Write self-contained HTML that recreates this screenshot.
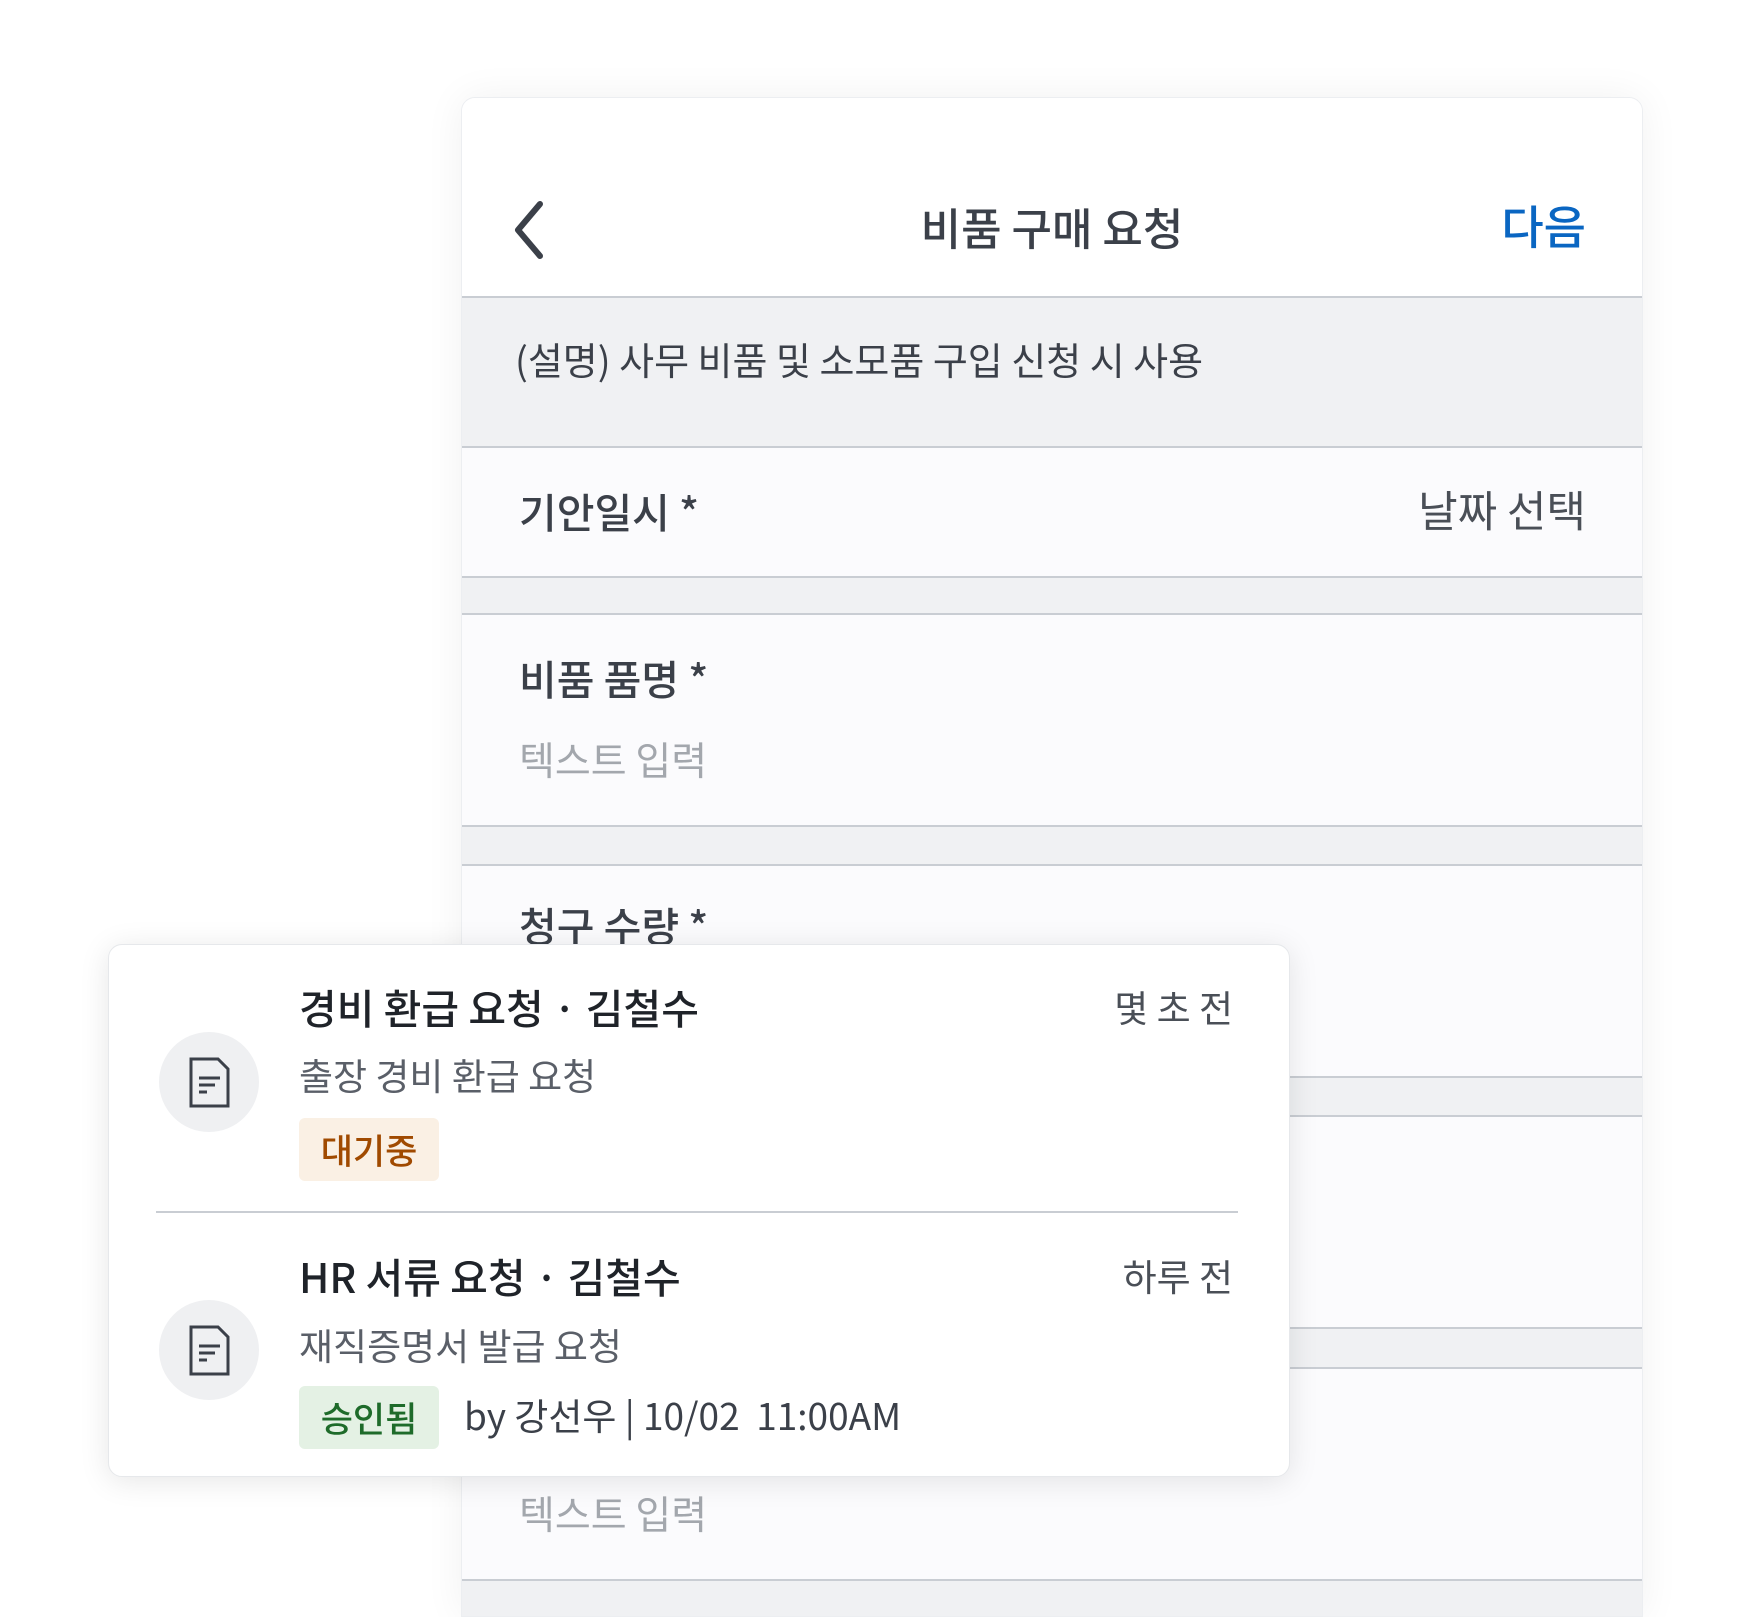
<!DOCTYPE html>
<html><head><meta charset="utf-8"><style>
*{margin:0;padding:0;box-sizing:border-box}
body{width:1751px;height:1601px;background:#fff;position:relative;overflow:hidden;font-family:"Noto Sans CJK KR","Liberation Sans",sans-serif;color:#3b4049}
.panel{position:absolute;left:461px;top:97px;width:1182px;height:1520px;background:#fbfbfd;border:1px solid #eceef1;border-radius:14px 14px 0 0;box-shadow:0 0 40px rgba(0,0,0,0.06);overflow:hidden}
.abs{position:absolute}
.hdr{left:0;top:0;width:100%;height:200px;background:#fff;border-bottom:2px solid #c9cdd3}
.band{left:0;width:100%;background:#f0f1f3;border-bottom:2px solid #c9cdd3}
.t{position:absolute;white-space:nowrap;line-height:1}
.lbl{font-size:41px;font-weight:500;color:#3b4049}
.ph{font-size:39px;color:#a3a7ad}
.card{position:absolute;left:108px;top:944px;width:1182px;height:533px;background:#fff;border:1px solid #e6e8eb;border-radius:14px;box-shadow:0 4px 30px rgba(0,0,0,0.10)}
.circ{position:absolute;left:50px;width:100px;height:100px;border-radius:50%;background:#eff0f2}
.ttl{font-size:41px;font-weight:500;color:#1f2329}
.sub{font-size:37px;color:#5a5f68}
.badge{position:absolute;left:190px;width:140px;height:63px;border-radius:6px;font-size:35px;font-weight:500;line-height:63px;text-align:center}
</style></head><body>
<div class="panel">
  <div class="abs hdr">
    <svg class="abs" style="left:48px;top:100px" width="40" height="64" viewBox="0 0 40 64"><path d="M30 6 L8 32 L30 58" fill="none" stroke="#3b4049" stroke-width="6" stroke-linecap="round" stroke-linejoin="round"/></svg>
    <div class="t" style="left:0;width:100%;text-align:center;top:106px;font-size:44px;font-weight:500">비품 구매 요청</div>
    <div class="t" style="right:56px;top:104px;font-size:46px;font-weight:500;color:#0a66c2">다음</div>
  </div>
  <div class="abs band" style="top:200px;height:150px;background:#f0f1f3">
    <div class="t" style="left:53px;top:42px;font-size:38px;color:#3b4049">(설명) 사무 비품 및 소모품 구입 신청 시 사용</div>
  </div>
  <div class="abs" style="top:350px;left:0;width:100%;height:130px;border-bottom:2px solid #c9cdd3">
    <div class="t lbl" style="left:57px;top:42px">기안일시 *</div>
    <div class="t" style="right:56px;top:40px;font-size:43px;color:#4a4f57">날짜 선택</div>
  </div>
  <div class="abs band" style="top:480px;height:37px"></div>
  <div class="abs" style="top:517px;left:0;width:100%;height:212px;border-bottom:2px solid #c9cdd3">
    <div class="t lbl" style="left:57px;top:42px">비품 품명 *</div>
    <div class="t ph" style="left:57px;top:125px">텍스트 입력</div>
  </div>
  <div class="abs band" style="top:729px;height:39px"></div>
  <div class="abs" style="top:768px;left:0;width:100%;height:212px;border-bottom:2px solid #c9cdd3">
    <div class="t lbl" style="left:57px;top:38px">청구 수량 *</div>
  </div>
  <div class="abs band" style="top:980px;height:39px"></div>
  <div class="abs" style="top:1019px;left:0;width:100%;height:212px;border-bottom:2px solid #c9cdd3"></div>
  <div class="abs band" style="top:1231px;height:40px"></div>
  <div class="abs" style="top:1271px;left:0;width:100%;height:212px;border-bottom:2px solid #c9cdd3">
    <div class="t ph" style="left:57px;top:125px">텍스트 입력</div>
  </div>
  <div class="abs band" style="top:1483px;height:40px;border-bottom:none"></div>
</div>

<div class="card">
  <div class="circ" style="top:87px"></div>
  <svg class="abs" style="left:76px;top:110px" width="48" height="56" viewBox="0 0 48 56"><path d="M6 4 H33 L43 14 V51 H6 Z" fill="none" stroke="#3b4049" stroke-width="3"/><path d="M14 23 H35 M14 30 H30 M14 37 H22" stroke="#3b4049" stroke-width="3"/></svg>
  <div class="t ttl" style="left:190px;top:41px">경비 환급 요청 · 김철수</div>
  <div class="t sub" style="right:56px;top:43px;color:#4a4f57">몇 초 전</div>
  <div class="t sub" style="left:190px;top:111px">출장 경비 환급 요청</div>
  <div class="badge" style="top:173px;background:#faf0e4;color:#a04a00">대기중</div>
  <div class="abs" style="left:47px;top:266px;width:1082px;height:2px;background:#c9cdd3"></div>
  <div class="circ" style="top:355px"></div>
  <svg class="abs" style="left:76px;top:378px" width="48" height="56" viewBox="0 0 48 56"><path d="M6 4 H33 L43 14 V51 H6 Z" fill="none" stroke="#3b4049" stroke-width="3"/><path d="M14 23 H35 M14 30 H30 M14 37 H22" stroke="#3b4049" stroke-width="3"/></svg>
  <div class="t ttl" style="left:190px;top:310px">HR 서류 요청 · 김철수</div>
  <div class="t sub" style="right:56px;top:312px;color:#4a4f57">하루 전</div>
  <div class="t sub" style="left:190px;top:381px">재직증명서 발급 요청</div>
  <div class="badge" style="top:441px;background:#e4f1e4;color:#1e6b2a">승인됨</div>
  <div class="t" style="left:355px;top:451px;font-size:37px;color:#3b4049">by 강선우 | 10/02&nbsp; 11:00AM</div>
</div>
</body></html>
